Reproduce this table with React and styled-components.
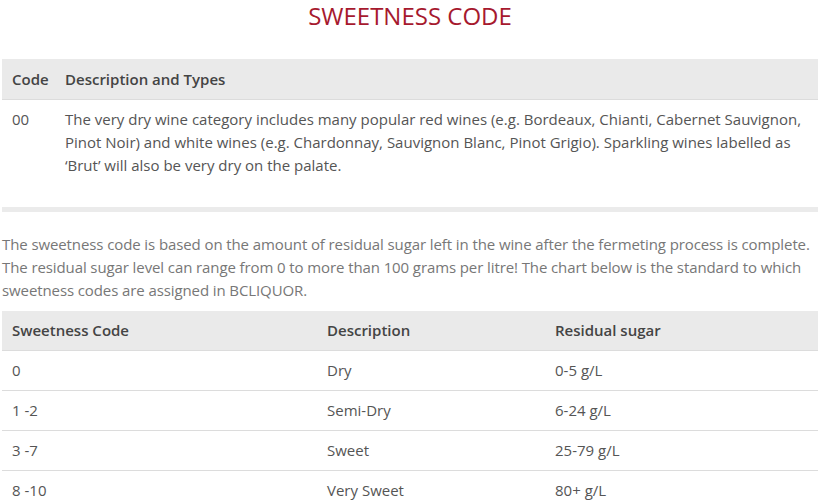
import styled, { createGlobalStyle } from 'styled-components';

const GlobalStyle = createGlobalStyle`
    body {
        margin: 0;
        background: #fff;
        font-family: "Open Sans", Lato, Arial, sans-serif;
    }
    *, *::before, *::after {
        box-sizing: border-box;
    }
`
const Page = styled.main`
    width: 816px;
    margin: 0 2px;
`
const Title = styled.h2`
    margin: 0;
    height: 59px;
    text-align: center;
    font-size: 24px;
    font-weight: 400;
    line-height: 32px;
    color: #a6192e;
`
const Table = styled.table`
    width: 100%;
    border-collapse: collapse;
    table-layout: fixed;
    font-size: 15px;
    color: #555;
`
const Th = styled.th`
    height: 40px;
    padding: 0 10px 0 ${({ $pl }) => $pl || '10px'};
    background: #eaeaea;
    border-bottom: 1px solid #dcdcdc;
    text-align: left;
    font-weight: 600;
    color: #444;
    width: ${({ $w }) => $w || 'auto'};
`
const Td = styled.td`
    padding: ${({ $tall }) => ($tall ? '8px 10px 10px' : '0 10px')};
    padding-left: ${({ $pl }) => $pl || '10px'};
    height: ${({ $tall }) => ($tall ? 'auto' : '40px')};
    line-height: 23px;
    vertical-align: ${({ $tall }) => ($tall ? 'top' : 'middle')};
    border-bottom: ${({ $line }) => ($line ? '1px solid #dcdcdc' : 'none')};
`
const Divider = styled.hr`
    margin: 20px 0 0;
    border: none;
    height: 5px;
    background: #ebebeb;
`
const Intro = styled.p`
    margin: 21px 0 9px;
    font-size: 15px;
    line-height: 23px;
    letter-spacing: -0.1px;
    color: #777;
`

const sweetness = [
    { code: '0', desc: 'Dry', sugar: '0-5 g/L' },
    { code: '1 -2', desc: 'Semi-Dry', sugar: '6-24 g/L' },
    { code: '3 -7', desc: 'Sweet', sugar: '25-79 g/L' },
    { code: '8 -10', desc: 'Very Sweet', sugar: '80+ g/L' },
]

function App() {
    return (
        <Page>
            <GlobalStyle />
            <Title>SWEETNESS CODE</Title>
            <Table>
                <thead>
                    <tr>
                        <Th $w="55px">Code</Th>
                        <Th $pl="8px">Description and Types</Th>
                    </tr>
                </thead>
                <tbody>
                    <tr>
                        <Td $tall>00</Td>
                        <Td $tall $pl="8px">
                            The very dry wine category includes many popular red wines (e.g. Bordeaux, Chianti, Cabernet Sauvignon, Pinot Noir) and white wines (e.g. Chardonnay, Sauvignon Blanc, Pinot Grigio). Sparkling wines labelled as ‘Brut’ will also be very dry on the palate.
                        </Td>
                    </tr>
                </tbody>
            </Table>
            <Divider />
            <Intro>
                The sweetness code is based on the amount of residual sugar left in the wine after the fermeting process is complete. The residual sugar level can range from 0 to more than 100 grams per litre! The chart below is the standard to which sweetness codes are assigned in BCLIQUOR.
            </Intro>
            <Table>
                <thead>
                    <tr>
                        <Th $w="315px">Sweetness Code</Th>
                        <Th $w="228px">Description</Th>
                        <Th>Residual sugar</Th>
                    </tr>
                </thead>
                <tbody>
                    {sweetness.map((row) => (
                        <tr key={row.code}>
                            <Td $line>{row.code}</Td>
                            <Td $line>{row.desc}</Td>
                            <Td $line>{row.sugar}</Td>
                        </tr>
                    ))}
                </tbody>
            </Table>
        </Page>
    )
}

export default App
